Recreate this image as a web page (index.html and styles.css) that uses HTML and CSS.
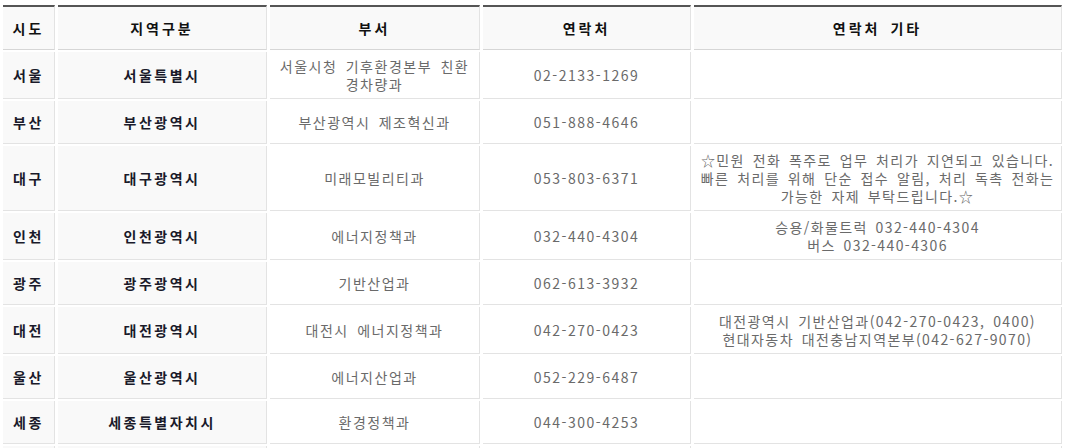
FILE: index.html
```html
<!DOCTYPE html>
<html lang="ko">
<head>
<meta charset="utf-8">
<title>지역별 연락처</title>
<link rel="stylesheet" href="styles.css">
</head>
<body>
<table class="contact-table">
  <thead>
    <tr>
      <th class="c-sido">시도</th>
      <th class="c-region">지역구분</th>
      <th class="c-dept">부서</th>
      <th class="c-phone">연락처</th>
      <th class="c-etc">연락처 기타</th>
    </tr>
  </thead>
  <tbody>
    <tr>
      <td class="key">서울</td>
      <td class="key">서울특별시</td>
      <td>서울시청 기후환경본부 친환경차량과</td>
      <td>02-2133-1269</td>
      <td class="etc"></td>
    </tr>
    <tr>
      <td class="key">부산</td>
      <td class="key">부산광역시</td>
      <td>부산광역시 제조혁신과</td>
      <td>051-888-4646</td>
      <td class="etc"></td>
    </tr>
    <tr>
      <td class="key">대구</td>
      <td class="key">대구광역시</td>
      <td>미래모빌리티과</td>
      <td>053-803-6371</td>
      <td class="etc">☆민원 전화 폭주로 업무 처리가 지연되고 있습니다. 빠른 처리를 위해 단순 접수 알림, 처리 독촉 전화는 가능한 자제 부탁드립니다.☆</td>
    </tr>
    <tr>
      <td class="key">인천</td>
      <td class="key">인천광역시</td>
      <td>에너지정책과</td>
      <td>032-440-4304</td>
      <td class="etc">승용/화물트럭 032-440-4304<br>버스 032-440-4306</td>
    </tr>
    <tr>
      <td class="key">광주</td>
      <td class="key">광주광역시</td>
      <td>기반산업과</td>
      <td>062-613-3932</td>
      <td class="etc"></td>
    </tr>
    <tr>
      <td class="key">대전</td>
      <td class="key">대전광역시</td>
      <td>대전시 에너지정책과</td>
      <td>042-270-0423</td>
      <td class="etc">대전광역시 기반산업과(042-270-0423, 0400)<br>현대자동차 대전충남지역본부(042-627-9070)</td>
    </tr>
    <tr>
      <td class="key">울산</td>
      <td class="key">울산광역시</td>
      <td>에너지산업과</td>
      <td>052-229-6487</td>
      <td class="etc"></td>
    </tr>
    <tr>
      <td class="key">세종</td>
      <td class="key">세종특별자치시</td>
      <td>환경정책과</td>
      <td>044-300-4253</td>
      <td class="etc"></td>
    </tr>
    <tr>
      <td class="key">경기</td>
      <td class="key">경기도</td>
      <td>기후에너지정책과</td>
      <td>031-8008-4000</td>
      <td class="etc"></td>
    </tr>
  </tbody>
</table>
</body>
</html>
```

FILE: styles.css
```css
html, body {
  margin: 0;
  padding: 0;
  background: #fff;
  overflow: hidden;
}

body {
  padding-top: 3px;
  font-family: "Noto Sans CJK KR", "Noto Sans", sans-serif;
}

.contact-table {
  width: 1065px;
  table-layout: fixed;
  border-collapse: separate;
  border-spacing: 3px 2px;
  font-size: 14px;
  letter-spacing: 1.5px;
  word-spacing: 3px;
  color: #6a6a6a;
}

.contact-table th,
.contact-table td {
  box-sizing: border-box;
  height: 43px;
  padding: 5px 8px;
  line-height: 18px;
  text-align: center;
  vertical-align: middle;
  border-right: 1px solid #e3e3e3;
  border-bottom: 1px solid #e3e3e3;
}

.contact-table th {
  height: 45px;
  border-top: 2px solid #555;
  border-bottom-color: #d6d6d6;
  background: #f9f9f9;
  color: #111;
  font-weight: bold;
  letter-spacing: 3px;
}

.c-sido { width: 52px; }
.c-region { width: 209px; }
.c-dept { width: 210px; }
.c-phone { width: 208px; }
.c-etc { width: 368px; }

.contact-table td.key {
  background: #f9f9f9;
  color: #1a1a2a;
  font-weight: bold;
  letter-spacing: 2.5px;
}

.contact-table td.etc {
  padding: 5px 4px;
  letter-spacing: 1.4px;
  word-spacing: 2.5px;
}
```
